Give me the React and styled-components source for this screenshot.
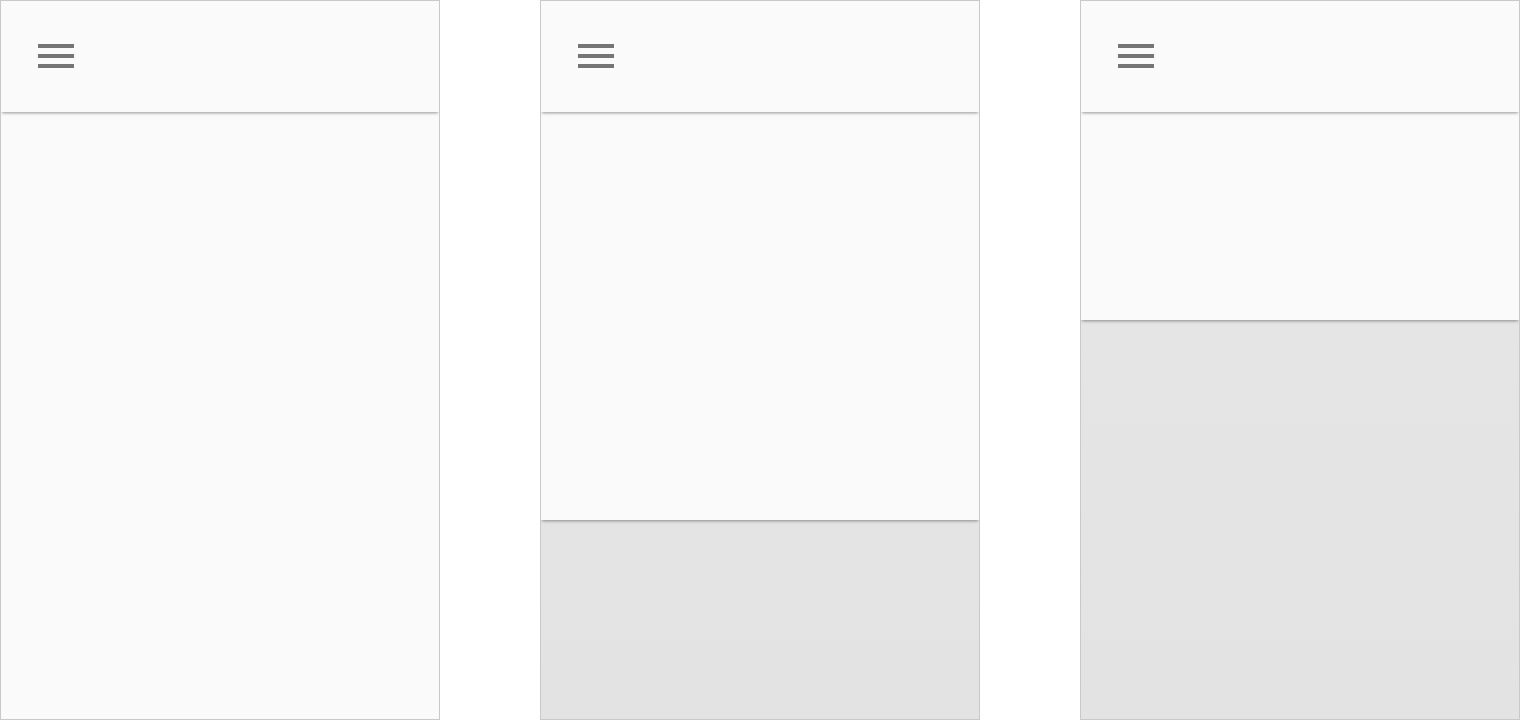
import React from "react";
import styled, { createGlobalStyle } from "styled-components";

const GlobalStyle = createGlobalStyle`
  html, body {
    margin: 0;
    padding: 0;
    background: #ffffff;
    font-family: "Roboto", "Liberation Sans", sans-serif;
  }
`;

const Row = styled.div`
  display: flex;
  gap: 100px;
  width: 1520px;
  height: 720px;
`;

const Phone = styled.div`
  box-sizing: border-box;
  width: 440px;
  height: 720px;
  border: 1px solid #c9c9c9;
  background: linear-gradient(#e2e2e2, #e5e5e5 40%, #e3e3e3);
  display: flex;
  flex-direction: column;
  overflow: hidden;
`;

const Sheet = styled.div`
  position: relative;
  background: #fafafa;
  height: ${(p) => (p.$height ? `${p.$height}px` : "100%")};
  flex: ${(p) => (p.$height ? "none" : "1")};
  box-shadow: ${(p) =>
    p.$height ? "0 2px 3px -1px rgba(0, 0, 0, 0.4)" : "none"};
  display: flex;
  flex-direction: column;
`;

const Header = styled.div`
  position: relative;
  z-index: 1;
  box-sizing: border-box;
  height: 111px;
  flex: none;
  background: #fafafa;
  box-shadow: 0 2px 3px -1px rgba(0, 0, 0, 0.4);
  display: flex;
  align-items: flex-start;
  padding: 43px 0 0 37px;
`;

const MenuButton = styled.button`
  border: 0;
  padding: 0;
  background: none;
  width: 36px;
  height: 24px;
  display: flex;
  flex-direction: column;
  justify-content: space-between;
  cursor: pointer;
`;

const Bar = styled.span`
  display: block;
  width: 36px;
  height: 4px;
  background: #757575;
`;

function Panel({ sheetHeight }) {
  return (
    <Phone>
      <Sheet $height={sheetHeight}>
        <Header>
          <MenuButton aria-label="Menu">
            <Bar />
            <Bar />
            <Bar />
          </MenuButton>
        </Header>
      </Sheet>
    </Phone>
  );
}

export default function App() {
  return (
    <>
      <GlobalStyle />
      <Row>
        <Panel />
        <Panel sheetHeight={519} />
        <Panel sheetHeight={319} />
      </Row>
    </>
  );
}
